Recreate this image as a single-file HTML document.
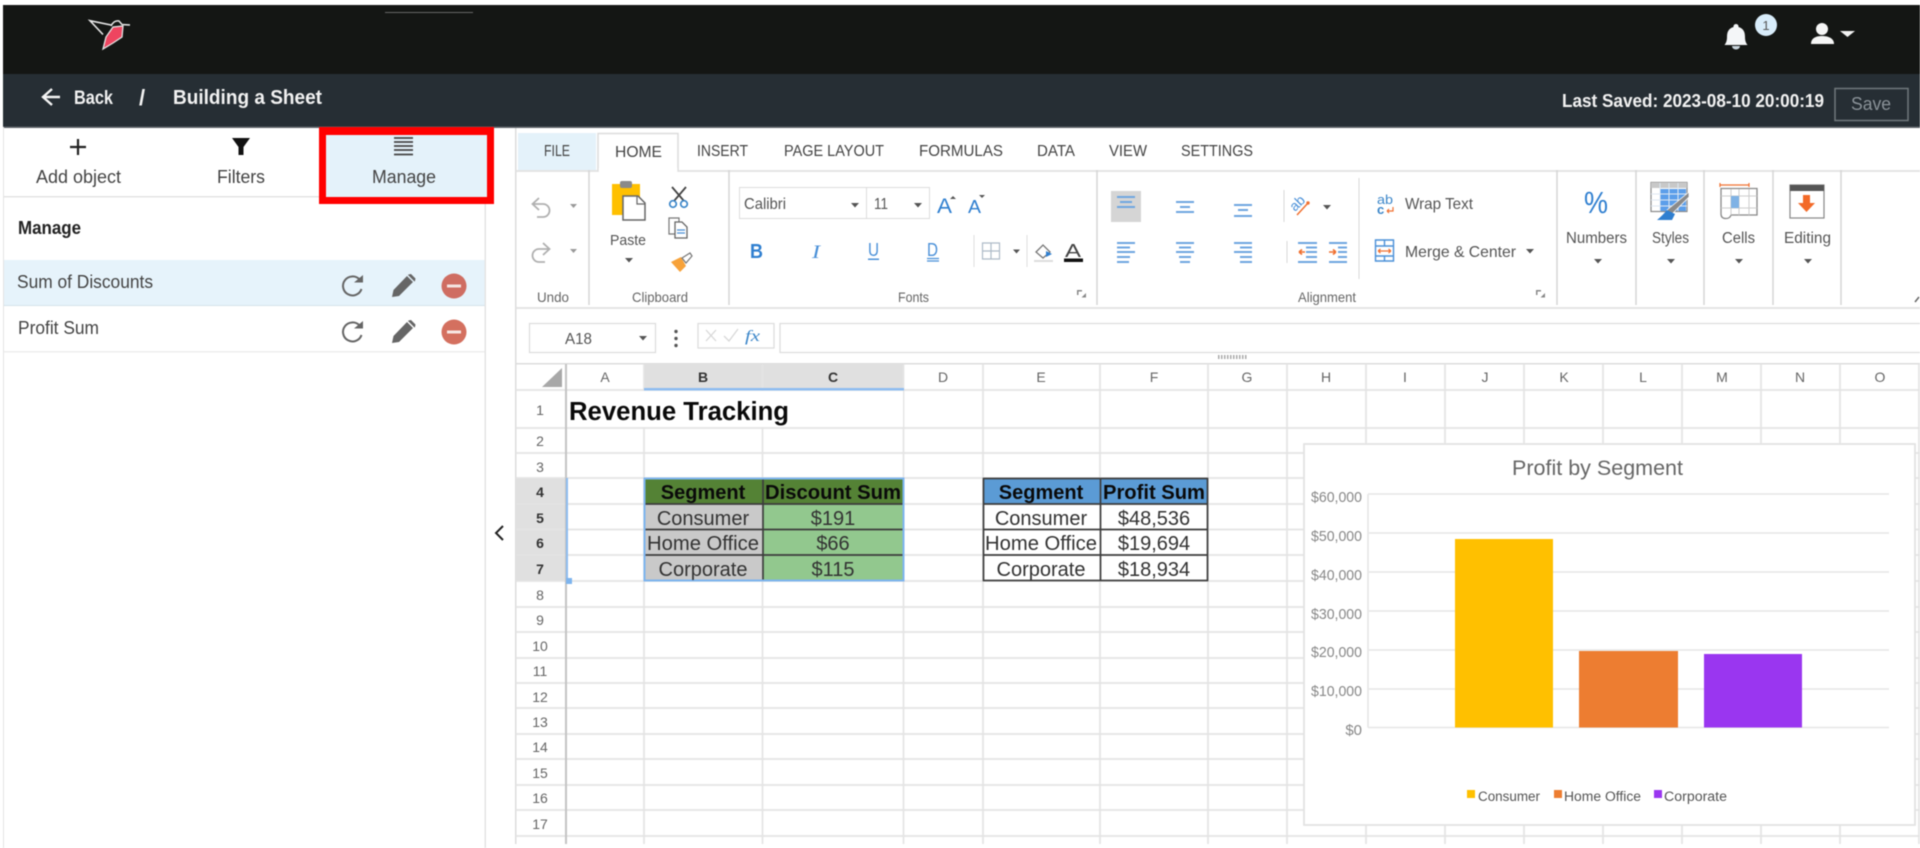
<!DOCTYPE html>
<html lang="en"><head><meta charset="utf-8"><title>Building a Sheet</title>
<style>
html,body{margin:0;padding:0;background:#fff;width:1920px;height:848px;overflow:hidden}
svg{display:block;filter:blur(.45px)}
text{font-family:"Liberation Sans",Arial,sans-serif}
.t{font-size:18px;fill:#444}
.tab{font-size:16px;fill:#444}
.lab{font-size:14px;fill:#666}
.rib{font-size:15px;fill:#555}
.ch{font-size:14px;fill:#666;text-anchor:middle}
.rh{font-size:14px;fill:#666;text-anchor:middle}
.sel{font-weight:bold;fill:#333}
.cell{font-size:20px;fill:#333;text-anchor:middle}
.hd{font-size:20px;font-weight:bold;fill:#0a0a0a;text-anchor:middle}
.ax{font-size:15px;fill:#888;text-anchor:end}
.lg{font-size:13.500px;fill:#555}
</style></head><body>
<svg width="1920" height="848" viewBox="0 0 1920 848" xmlns="http://www.w3.org/2000/svg">
<rect width="1920" height="848" fill="#fff"/>
<!-- top bars -->
<rect x="3" y="5" width="1917" height="69" fill="#141614"/>
<rect x="385" y="12" width="88" height="1" fill="#666"/>
<rect x="3" y="74" width="1917" height="53" fill="#262e34"/>
<rect x="3" y="126.500" width="1917" height="1.500" fill="#5c6267"/>
<!-- logo -->
<path d="M103 49 L106 37 L113 27 L123 26 L122 37 L113 43 Z" fill="#ee4560" stroke="#e4e4e4" stroke-width="1.300"/>
<path d="M111 25 L90 20.700 L103 34.500" fill="none" stroke="#e8e8e8" stroke-width="1.600"/>
<path d="M111 26 Q114 20 119 21 L122 24.500 L130 25" fill="none" stroke="#e8e8e8" stroke-width="1.500"/>
<!-- breadcrumb -->
<path d="M60 97 H44 M52 89 L43 97 L52 105" fill="none" stroke="#f4f4f4" stroke-width="2.400"/>
<text x="74" y="104" font-size="19.500" font-weight="bold" fill="#f2f2f2" textLength="39" lengthAdjust="spacingAndGlyphs">Back</text>
<text x="139" y="105" font-size="22" font-weight="bold" fill="#f2f2f2">/</text>
<text x="173" y="104" font-size="20" font-weight="bold" fill="#f2f2f2" textLength="149" lengthAdjust="spacingAndGlyphs">Building a Sheet</text>
<!-- right top -->
<path d="M1736 24 a2.500 2.500 0 0 1 2.500 3 c5 1.500 6.500 5 6.500 10 c0 4 1 6 2.500 8 h-23 c1.500-2 2.500-4 2.500-8 c0-5 1.500-8.500 6.500-10 a2.500 2.500 0 0 1 2.500-3z" fill="#f4f6f8"/>
<path d="M1732 46 h8 a4 3.500 0 0 1-8 0z" fill="#c8d4dc"/>
<circle cx="1766" cy="25" r="11" fill="#d8ecfa"/>
<text x="1766" y="30" font-size="13" fill="#555" text-anchor="middle">1</text>
<circle cx="1822" cy="29" r="6" fill="#f6f6f6"/>
<path d="M1811 44 c0-6 5-8 11-8 s12 2 12 8z" fill="#f6f6f6"/>
<path d="M1840 31 h15 l-7.500 6z" fill="#f2f2f2"/>
<text x="1562" y="107" font-size="18.500" font-weight="bold" fill="#f2f2f2" textLength="262" lengthAdjust="spacingAndGlyphs">Last Saved: 2023-08-10 20:00:19</text>
<rect x="1835" y="88.500" width="73" height="32" fill="none" stroke="#70787c" stroke-width="1.500"/>
<text x="1851" y="110" font-size="18" fill="#8a9298" textLength="40" lengthAdjust="spacingAndGlyphs">Save</text>

<!-- left panel -->
<rect x="0" y="0" width="3" height="848" fill="#fff"/>
<rect x="3" y="196" width="316" height="1.500" fill="#e4e4e4"/>
<rect x="3" y="260" width="482" height="45" fill="#e6f3fb"/>
<rect x="3" y="305" width="482" height="1" fill="#d4e2ea"/>
<rect x="3" y="351" width="482" height="1.500" fill="#eeeeee"/>
<rect x="484.500" y="204" width="1.500" height="644" fill="#e4e4e4"/>
<rect x="3" y="127" width="1" height="721" fill="#e4e4e4"/>
<path d="M78 139 V155 M70 147 H86" stroke="#222" stroke-width="2.200" fill="none"/>
<text x="36" y="183" class="t" textLength="85" lengthAdjust="spacingAndGlyphs">Add object</text>
<path d="M232 138 H250 L243.500 147 V155 H238.500 V147 Z" fill="#111"/>
<text x="217" y="183" class="t" textLength="48" lengthAdjust="spacingAndGlyphs">Filters</text>
<rect x="319" y="127" width="175" height="77" fill="#ff0000"/>
<rect x="326" y="135" width="161" height="62" fill="#e4f2fa"/>
<path d="M394 138 H413 M394 142 H413 M394 146 H413 M394 150 H413 M394 154.500 H413" stroke="#444" stroke-width="1.700"/>
<text x="372" y="183" class="t" textLength="64" lengthAdjust="spacingAndGlyphs">Manage</text>
<text x="18" y="234" font-size="18" font-weight="bold" fill="#222" textLength="63" lengthAdjust="spacingAndGlyphs">Manage</text>
<text x="17" y="288" class="t" textLength="136" lengthAdjust="spacingAndGlyphs">Sum of Discounts</text>
<text x="18" y="334" class="t" textLength="81" lengthAdjust="spacingAndGlyphs">Profit Sum</text>
<!-- row icons -->
<g>
<path d="M359.500 279.500 A9.500 9.500 0 1 0 361.500 289" fill="none" stroke="#666" stroke-width="2"/>
<path d="M354 282.500 H363 V275 Z" fill="#666"/>
<path d="M392 297 L393.500 290 L407 276 L413 282 L399 296 Z M408.500 274.500 L411 274 L415.500 278.500 L415 281 L414.500 281.500 L408 275 Z" fill="#666"/>
<circle cx="454" cy="286" r="12.500" fill="#cf6d62"/>
<rect x="447" y="284.500" width="14" height="3" fill="#f4e4e2"/>
</g>
<g transform="translate(0,46)">
<path d="M359.500 279.500 A9.500 9.500 0 1 0 361.500 289" fill="none" stroke="#666" stroke-width="2"/>
<path d="M354 282.500 H363 V275 Z" fill="#666"/>
<path d="M392 297 L393.500 290 L407 276 L413 282 L399 296 Z M408.500 274.500 L411 274 L415.500 278.500 L415 281 L414.500 281.500 L408 275 Z" fill="#666"/>
<circle cx="454" cy="286" r="12.500" fill="#d4705f"/>
<rect x="447" y="284.500" width="14" height="3" fill="#f8e8e4"/>
</g>
<path d="M503 526 L496 533 L503 540" fill="none" stroke="#222" stroke-width="2"/>

<!-- ribbon -->
<rect x="515" y="128" width="1.500" height="716" fill="#dcdcdc"/>
<rect x="516" y="170" width="1404" height="2" fill="#e4e4e4"/>
<rect x="518" y="133" width="78" height="37" fill="#e4f2fa"/>
<path d="M598 171 V133.500 H678 V171" fill="#fff" stroke="#dcdcdc" stroke-width="1.500"/>
<rect x="598.800" y="168" width="78.500" height="5" fill="#fff"/>
<text x="544" y="156" class="tab" textLength="26" lengthAdjust="spacingAndGlyphs">FILE</text>
<text x="615" y="157" class="tab" textLength="47" lengthAdjust="spacingAndGlyphs">HOME</text>
<text x="697" y="156" class="tab" textLength="51" lengthAdjust="spacingAndGlyphs">INSERT</text>
<text x="784" y="156" class="tab" textLength="100" lengthAdjust="spacingAndGlyphs">PAGE LAYOUT</text>
<text x="919" y="156" class="tab" textLength="84" lengthAdjust="spacingAndGlyphs">FORMULAS</text>
<text x="1037" y="156" class="tab" textLength="38" lengthAdjust="spacingAndGlyphs">DATA</text>
<text x="1109" y="156" class="tab" textLength="38" lengthAdjust="spacingAndGlyphs">VIEW</text>
<text x="1181" y="156" class="tab" textLength="72" lengthAdjust="spacingAndGlyphs">SETTINGS</text>
<!-- group seps -->
<path d="M589 170 V305 M729 170 V305 M1097 170 V305 M1557 170 V305 M1636 170 V305 M1704 170 V305 M1773 170 V305 M1841 170 V305" stroke="#d6d6d6" stroke-width="1.500"/>
<rect x="516" y="307" width="1404" height="2" fill="#e4e4e4"/>
<text x="537" y="302" class="lab" textLength="32" lengthAdjust="spacingAndGlyphs">Undo</text>
<text x="632" y="302" class="lab" textLength="56" lengthAdjust="spacingAndGlyphs">Clipboard</text>
<text x="898" y="302" class="lab" textLength="31" lengthAdjust="spacingAndGlyphs">Fonts</text>
<text x="1298" y="302" class="lab" textLength="58" lengthAdjust="spacingAndGlyphs">Alignment</text>
<path d="M1077 290 h5 v1.500 h-3.500 v3.500 h-1.500z M1086 293 v4.500 h-4.500z M1536 290 h5 v1.500 h-3.500 v3.500 h-1.500z M1545 293 v4.500 h-4.500z" fill="#888"/>
<!-- undo redo -->
<path d="M533 204 H543 a6.500 6.500 0 0 1 0 13 H537 M539 198 L532.500 204 L539 210" fill="none" stroke="#b0b0b0" stroke-width="1.800"/>
<path d="M549 249 H539 a6.500 6.500 0 0 0 0 13 H545 M543 243 L549.500 249 L543 255" fill="none" stroke="#b0b0b0" stroke-width="1.800"/>
<path d="M570 204 h7 l-3.500 4z M570 249 h7 l-3.500 4z" fill="#999"/>
<!-- paste -->
<rect x="612" y="184" width="28" height="31" fill="#ffc000"/>
<rect x="620" y="181" width="12" height="7" rx="2" fill="#8a8a8a"/>
<path d="M623 196 H638 L645 203 V220 H623 Z" fill="#fff" stroke="#666" stroke-width="1.500"/>
<path d="M637 196 V204 H645" fill="none" stroke="#666" stroke-width="1.200"/>
<text x="610" y="245" class="rib" textLength="36" lengthAdjust="spacingAndGlyphs">Paste</text>
<path d="M625 258 h8 l-4 4.500z" fill="#555"/>
<!-- scissors -->
<path d="M672 187 L684 201 M686 187 L674 201" stroke="#444" stroke-width="1.800"/>
<circle cx="673" cy="204" r="3.300" fill="none" stroke="#3b86c9" stroke-width="1.700"/>
<circle cx="684" cy="204" r="3.300" fill="none" stroke="#3b86c9" stroke-width="1.700"/>
<!-- copy -->
<path d="M669 218 h10 v16 h-10z" fill="#fff" stroke="#777" stroke-width="1.200"/>
<path d="M675 222 h7 l5 5 v11 h-12z" fill="#fff" stroke="#666" stroke-width="1.300"/>
<path d="M677 230 h8 M677 233 h8" stroke="#4a8fd4" stroke-width="1.200"/>
<!-- brush -->
<path d="M671 262 L681 257 L686 266 L680 272 Z" fill="#f7a23a"/>
<path d="M682 258 L690 253 L692 256 L686 263 Z" fill="#fff" stroke="#777" stroke-width="1.200"/>
<!-- font boxes -->
<rect x="739.500" y="187.500" width="127" height="31" fill="#fff" stroke="#dcdcdc"/>
<rect x="866.500" y="187.500" width="63" height="31" fill="#fff" stroke="#dcdcdc"/>
<text x="744" y="209" class="rib" textLength="42" lengthAdjust="spacingAndGlyphs" style="font-size:16px">Calibri</text>
<text x="874" y="209" class="rib" style="font-size:16px" textLength="14" lengthAdjust="spacingAndGlyphs">11</text>
<path d="M851 203 h8 l-4 4.500z M914 203 h8 l-4 4.500z" fill="#555"/>
<text x="937" y="213" font-size="21" fill="#2f7fd0" textLength="15" lengthAdjust="spacingAndGlyphs">A</text>
<path d="M950 199 l3 -3 l3 3z" fill="#555"/>
<text x="968" y="213" font-size="18" fill="#2f7fd0" textLength="13" lengthAdjust="spacingAndGlyphs">A</text>
<path d="M979 195 h6 l-3 3z" fill="#555"/>
<text x="750" y="258" font-size="20" font-weight="bold" fill="#2f7fd0" textLength="13" lengthAdjust="spacingAndGlyphs">B</text>
<text x="812" y="258" font-size="19" font-style="italic" fill="#4a90d8" textLength="8" lengthAdjust="spacingAndGlyphs" style="font-family:'Liberation Serif',serif">I</text>
<text x="868" y="256" font-size="18" fill="#4a90d8" textLength="11" lengthAdjust="spacingAndGlyphs">U</text>
<rect x="868" y="258.500" width="11" height="1.500" fill="#4a90d8"/>
<text x="927" y="256" font-size="18" fill="#4a90d8" textLength="11" lengthAdjust="spacingAndGlyphs">D</text>
<path d="M927 258.500 h12 M927 261 h12" stroke="#4a90d8" stroke-width="1.200"/>
<path d="M974 235 V267 M1027 235 V267" stroke="#ddd" stroke-width="1"/>
<path d="M982.500 243 h17 v16 h-17z M991 243 v16 M982.500 251 h17" fill="none" stroke="#aebbc8" stroke-width="1.200"/>
<path d="M1013 249.500 h7 l-3.500 4z" fill="#555"/>
<path d="M1036 252 L1043 245 L1050 252 L1043 258 Z" fill="none" stroke="#777" stroke-width="1.300"/>
<path d="M1046 251 l6 3 l-6 3z" fill="#2f7fd0"/>
<rect x="1034" y="260" width="19" height="2" fill="#ddd"/>
<text x="1065" y="257" font-size="18" fill="#444" textLength="16" lengthAdjust="spacingAndGlyphs">A</text>
<rect x="1064" y="258.500" width="19" height="3.500" fill="#111"/>
<!-- alignment -->
<rect x="1111" y="191" width="30" height="31" fill="#d5d5d5"/>
<g fill="none" stroke="#6ea6e0" stroke-width="1.900">
<path d="M1117 197 H1135 M1120 202 H1132 M1117 207 H1135"/>
<path d="M1176 202 H1194 M1180 207 H1190 M1176 212 H1194"/>
<path d="M1234 205 H1252 M1238 210 H1248 M1234 216 H1252"/>
<path d="M1117 243 H1135 M1117 247.500 H1130 M1117 252 H1135 M1117 257 H1130 M1117 262 H1129"/>
<path d="M1176 243 H1194 M1179 247.500 H1191 M1176 252 H1194 M1179 257 H1191 M1180 262 H1190"/>
<path d="M1234 243 H1252 M1240 247.500 H1252 M1234 252 H1252 M1240 257 H1252 M1240 262 H1252"/>
<path d="M1298 243 H1317 M1306 247.500 H1317 M1306 252 H1317 M1306 257 H1317 M1298 262 H1317"/>
<path d="M1329 243 H1347 M1338 247.500 H1347 M1338 252 H1347 M1338 257 H1347 M1329 262 H1347"/>
</g>
<path d="M1299 252 h6 m-6 0 l3 -2.500 m-3 2.500 l3 2.500 M1329 252 h7 m0 0 l-3 -2.500 m3 2.500 l-3 2.500" fill="none" stroke="#f07030" stroke-width="1.600"/>
<path d="M1284 190 V222 M1287 241 V263 M1359 178 V279" stroke="#d8d8d8" stroke-width="1"/>
<text transform="translate(1295,212) rotate(-45)" font-size="14" fill="#4a90d8">ab</text>
<path d="M1297 215 L1308 203" fill="none" stroke="#f07030" stroke-width="1.500"/>
<circle cx="1308" cy="203" r="1.700" fill="#f07030"/>
<path d="M1323 205 h8 l-4 4.500z" fill="#555"/>
<text x="1377" y="204" font-size="13" fill="#3b86c9" textLength="16" lengthAdjust="spacingAndGlyphs">ab</text>
<text x="1377" y="214" font-size="13" font-weight="bold" fill="#3b86c9">c</text>
<path d="M1393 207 v4 h-6 m0 0 l2 -2 m-2 2 l2 2" fill="none" stroke="#f07030" stroke-width="1.200"/>
<text x="1405" y="209" class="rib" textLength="68" lengthAdjust="spacingAndGlyphs" style="font-size:16px">Wrap Text</text>
<path d="M1375.500 240 h18 v21 h-18z M1375.500 246 h18 M1375.500 256 h18 M1384.500 240 v6 M1384.500 256 v5" fill="none" stroke="#4a90d8" stroke-width="1.400"/>
<path d="M1378 251 h13 m-13 0 l2.500 -2 m-2.500 2 l2.500 2 m10.500 -2 l-2.500 -2 m2.500 2 l-2.500 2" fill="none" stroke="#f07030" stroke-width="1.200"/>
<text x="1405" y="257" class="rib" textLength="111" lengthAdjust="spacingAndGlyphs" style="font-size:16px">Merge &amp; Center</text>
<path d="M1526 249 h8 l-4 4.500z" fill="#555"/>
<!-- right groups -->
<text x="1584" y="213" font-size="31" fill="#2f7fd0" textLength="24" lengthAdjust="spacingAndGlyphs">%</text>
<text x="1566" y="243" class="rib" textLength="61" lengthAdjust="spacingAndGlyphs" style="font-size:15.500px">Numbers</text>
<path d="M1594 259 h8 l-4 4.500z" fill="#555"/>
<rect x="1651" y="182.500" width="36" height="29" fill="#fff" stroke="#888" stroke-width="1.200"/>
<rect x="1651" y="182.500" width="36" height="5.500" fill="#c8c8c8"/>
<rect x="1660" y="189" width="26" height="22" fill="#5b9eea"/>
<path d="M1651 194 H1687 M1651 200 H1687 M1651 206 H1687 M1660 183 V211 M1669 183 V211 M1678 183 V211" stroke="#dfe8f2" stroke-width="1"/>
<path d="M1689 192 L1667 210 L1671 215 L1689 197 Z" fill="#8a8a8a" stroke="#fff" stroke-width=".8"/>
<path d="M1667 210 Q1662 216 1657 220 H1672 L1675 214 Z" fill="#2f7fd0"/>
<text x="1652" y="243" class="rib" textLength="37" lengthAdjust="spacingAndGlyphs" style="font-size:15.500px">Styles</text>
<path d="M1667 259 h8 l-4 4.500z" fill="#555"/>
<path d="M1720 185 H1749 M1720 183 v4 M1749 183 v4" stroke="#f07030" stroke-width="1.200" fill="none"/>
<path d="M1721 188.500 H1757 V215 H1731 Q1730 218.500 1726 218.500 Q1721 218.500 1721 214 Z" fill="#fff" stroke="#888" stroke-width="1.300"/>
<path d="M1721 196 H1757 M1721 208 H1757 M1731 189 V215 M1739 189 V215 M1749 189 V215" stroke="#ccc" stroke-width="1"/>
<rect x="1731" y="196" width="8" height="12" fill="#7fb2e5"/>
<text x="1722" y="243" class="rib" textLength="33" lengthAdjust="spacingAndGlyphs" style="font-size:15.500px">Cells</text>
<path d="M1735 259 h8 l-4 4.500z" fill="#555"/>
<rect x="1790" y="185" width="34" height="33" fill="#fff" stroke="#888" stroke-width="1.200"/>
<rect x="1790" y="185" width="34" height="6" fill="#555"/>
<path d="M1803 195 h7 v8 h5 l-8.500 9 l-8.500 -9 h5z" fill="#f36a28"/>
<text x="1784" y="243" class="rib" textLength="47" lengthAdjust="spacingAndGlyphs" style="font-size:15.500px">Editing</text>
<path d="M1804 259 h8 l-4 4.500z" fill="#555"/>
<path d="M1915 302 L1919 297" stroke="#666" stroke-width="1.500"/>

<!-- formula bar -->
<rect x="529.500" y="323.500" width="126" height="29" fill="#fff" stroke="#dcdcdc" stroke-width="1.200"/>
<text x="565" y="344" class="rib" textLength="27" lengthAdjust="spacingAndGlyphs" style="font-size:16px">A18</text>
<path d="M639 336 h8 l-4 4.500z" fill="#555"/>
<circle cx="676" cy="331.500" r="1.700" fill="#555"/><circle cx="676" cy="338.500" r="1.700" fill="#555"/><circle cx="676" cy="345.500" r="1.700" fill="#555"/>
<rect x="698" y="323.500" width="76" height="24.500" fill="#fff" stroke="#dcdcdc" stroke-width="1.200"/>
<path d="M706 330 L716 341 M716 330 L706 341 M724 336 L729 341 L738 329" fill="none" stroke="#d8d8d8" stroke-width="1.300"/>
<text x="745" y="341" font-size="16" font-style="italic" fill="#3b86c9" style="font-family:'Liberation Serif',serif" textLength="15" lengthAdjust="spacingAndGlyphs">fx</text>
<rect x="780" y="323.500" width="1150" height="29" fill="#fff" stroke="#dcdcdc" stroke-width="1.200"/>
<path d="M1218 357 H1247" stroke="#aaa" stroke-width="4" stroke-dasharray="1.500 1.500"/>

<!-- grid -->
<rect x="516" y="363" width="1404" height="1.500" fill="#dcdcdc"/>
<rect x="644" y="364" width="260" height="25" fill="#e0e0e0"/>
<rect x="516" y="478" width="50" height="103" fill="#e0e0e0"/>
<g stroke="#e4e4e4" stroke-width="1.700" fill="none">
<path d="M644 364 V844 M762.500 364 V844 M903.500 364 V844 M983 364 V844 M1100 364 V844 M1208 364 V844 M1287 364 V844 M1366 364 V844 M1445 364 V844 M1524 364 V844 M1603 364 V844 M1682 364 V844 M1761 364 V844 M1840 364 V844 M1919 364 V844"/>
<path d="M516 390 H1920 M516 428 H1920 M516 453 H1920 M516 478 H1920 M516 504 H1920 M516 529.500 H1920 M516 555 H1920 M516 581 H1920 M516 607 H1920 M516 632 H1920 M516 658 H1920 M516 683 H1920 M516 708 H1920 M516 734 H1920 M516 759 H1920 M516 785 H1920 M516 810 H1920 M516 836 H1920"/>
</g>
<rect x="567" y="391" width="336" height="36" fill="#fff"/>
<rect x="565" y="364" width="2" height="480" fill="#c4c4c4"/>
<rect x="644" y="388" width="260" height="2.500" fill="#8ebcf0"/>
<path d="M562 368 V387 H542 Z" fill="#a8a8a8"/>
<text class="ch" x="605" y="382">A</text>
<text class="ch sel" x="703" y="382">B</text>
<text class="ch sel" x="833" y="382">C</text>
<text class="ch" x="943" y="382">D</text>
<text class="ch" x="1041" y="382">E</text>
<text class="ch" x="1154" y="382">F</text>
<text class="ch" x="1247" y="382">G</text>
<text class="ch" x="1326" y="382">H</text>
<text class="ch" x="1405" y="382">I</text>
<text class="ch" x="1485" y="382">J</text>
<text class="ch" x="1564" y="382">K</text>
<text class="ch" x="1643" y="382">L</text>
<text class="ch" x="1722" y="382">M</text>
<text class="ch" x="1800" y="382">N</text>
<text class="ch" x="1880" y="382">O</text>
<text class="rh" x="540" y="415">1</text>
<text class="rh" x="540" y="446">2</text>
<text class="rh" x="540" y="472">3</text>
<text class="rh sel" x="540" y="497">4</text>
<text class="rh sel" x="540" y="523">5</text>
<text class="rh sel" x="540" y="548">6</text>
<text class="rh sel" x="540" y="574">7</text>
<text class="rh" x="540" y="600">8</text>
<text class="rh" x="540" y="625">9</text>
<text class="rh" x="540" y="651">10</text>
<text class="rh" x="540" y="676">11</text>
<text class="rh" x="540" y="702">12</text>
<text class="rh" x="540" y="727">13</text>
<text class="rh" x="540" y="752">14</text>
<text class="rh" x="540" y="778">15</text>
<text class="rh" x="540" y="803">16</text>
<text class="rh" x="540" y="829">17</text>
<text x="569" y="420" font-size="25.500" font-weight="bold" fill="#0a0a0a" textLength="220" lengthAdjust="spacingAndGlyphs">Revenue Tracking</text>
<!-- selection marker -->
<rect x="566" y="478" width="2" height="103" fill="#8ebcf0"/>
<rect x="566" y="578" width="6" height="6" fill="#7db4ee"/>
<!-- table 1 -->
<rect x="644" y="478" width="260" height="26" fill="#548235"/>
<rect x="644" y="504" width="119" height="77" fill="#c9c9c9"/>
<rect x="763" y="504" width="141" height="77" fill="#92c88e"/>
<path d="M644 504 H904 M644 529.500 H904 M644 555 H904 M763 478 V581" stroke="#3c3c3c" stroke-width="1.700" fill="none"/>
<rect x="644.500" y="478.500" width="259" height="102" fill="none" stroke="#7db4ee" stroke-width="2"/>
<text class="hd" x="703" y="499">Segment</text>
<text class="hd" x="833" y="499" textLength="136" lengthAdjust="spacingAndGlyphs">Discount Sum</text>
<text class="cell" x="703" y="525">Consumer</text>
<text class="cell" x="703" y="550" textLength="112" lengthAdjust="spacingAndGlyphs">Home Office</text>
<text class="cell" x="703" y="576">Corporate</text>
<text class="cell" x="833" y="525">$191</text>
<text class="cell" x="833" y="550">$66</text>
<text class="cell" x="833" y="576">$115</text>
<!-- table 2 -->
<rect x="983" y="478" width="225" height="26" fill="#5b9bd5"/>
<rect x="983" y="504" width="225" height="77" fill="#fff"/>
<path d="M983 504 H1208 M983 529.500 H1208 M983 555 H1208 M1100.500 478 V581" stroke="#3c3c3c" stroke-width="1.700" fill="none"/>
<rect x="983.500" y="478.500" width="224" height="102" fill="none" stroke="#3c3c3c" stroke-width="1.700"/>
<text class="hd" x="1041" y="499">Segment</text>
<text class="hd" x="1154" y="499" textLength="102" lengthAdjust="spacingAndGlyphs">Profit Sum</text>
<text class="cell" x="1041" y="525">Consumer</text>
<text class="cell" x="1041" y="550" textLength="112" lengthAdjust="spacingAndGlyphs">Home Office</text>
<text class="cell" x="1041" y="576">Corporate</text>
<text class="cell" x="1154" y="525">$48,536</text>
<text class="cell" x="1154" y="550">$19,694</text>
<text class="cell" x="1154" y="576">$18,934</text>
<!-- chart -->
<rect x="1304" y="444" width="611" height="381" fill="#fff" stroke="#e2e2e2" stroke-width="1.700"/>
<text x="1512" y="475" font-size="21" fill="#666" textLength="171" lengthAdjust="spacingAndGlyphs">Profit by Segment</text>
<path d="M1368 494 H1889 M1368 533 H1889 M1368 572 H1889 M1368 611 H1889 M1368 650 H1889 M1368 689 H1889 M1368 727.500 H1889 M1368 494 V727.500" stroke="#e6e6e6" stroke-width="1.600" fill="none"/>
<text class="ax" x="1362" y="502" textLength="51" lengthAdjust="spacingAndGlyphs">$60,000</text>
<text class="ax" x="1362" y="541" textLength="51" lengthAdjust="spacingAndGlyphs">$50,000</text>
<text class="ax" x="1362" y="580" textLength="51" lengthAdjust="spacingAndGlyphs">$40,000</text>
<text class="ax" x="1362" y="619" textLength="51" lengthAdjust="spacingAndGlyphs">$30,000</text>
<text class="ax" x="1362" y="657" textLength="51" lengthAdjust="spacingAndGlyphs">$20,000</text>
<text class="ax" x="1362" y="696" textLength="51" lengthAdjust="spacingAndGlyphs">$10,000</text>
<text class="ax" x="1362" y="735">$0</text>
<rect x="1455" y="539" width="98" height="188.500" fill="#ffc000"/>
<rect x="1579" y="651" width="99" height="76.500" fill="#ed7d31"/>
<rect x="1704" y="654" width="98" height="73.500" fill="#9a36f0"/>
<rect x="1467" y="790" width="8" height="8" fill="#ffc000"/>
<rect x="1554" y="790" width="8" height="8" fill="#ed7d31"/>
<rect x="1654" y="790" width="8" height="8" fill="#9a36f0"/>
<text class="lg" x="1478" y="801" textLength="62" lengthAdjust="spacingAndGlyphs">Consumer</text>
<text class="lg" x="1564" y="801" textLength="77" lengthAdjust="spacingAndGlyphs">Home Office</text>
<text class="lg" x="1664" y="801" textLength="63" lengthAdjust="spacingAndGlyphs">Corporate</text>
<!-- bottom strip -->
<rect x="486" y="844" width="1434" height="4" fill="#fff"/>
</svg>
</body></html>
